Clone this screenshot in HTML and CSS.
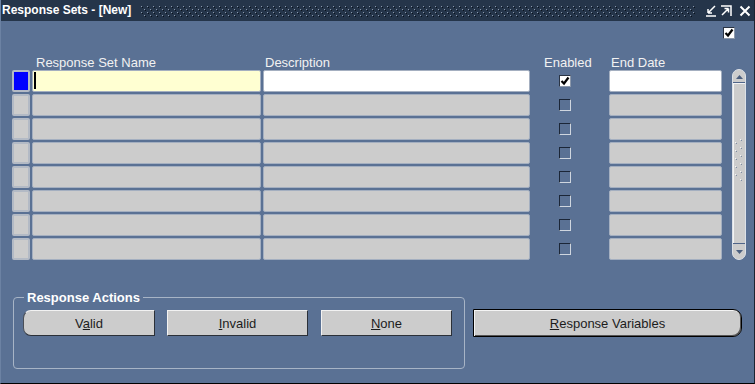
FILE: index.html
```html
<!DOCTYPE html>
<html lang="en">
<head>
    <meta charset="UTF-8">
    <title>Response Sets - [New]</title>
    <link rel="stylesheet" href="styles.css">
</head>
<body>
    <div class="window">
        <div class="titlebar">
            <span class="title">Response Sets - [New]</span>
            <svg class="title-dots" width="555" height="12">
                <defs>
                    <pattern id="dots" width="6" height="6" patternUnits="userSpaceOnUse">
                        <rect x="0" y="1" width="1" height="1" fill="#8a98ab"/>
                        <rect x="1" y="2" width="1" height="1" fill="#0b121b"/>
                        <rect x="3" y="4" width="1" height="1" fill="#8a98ab"/>
                        <rect x="4" y="5" width="1" height="1" fill="#0b121b"/>
                    </pattern>
                </defs>
                <rect width="555" height="12" fill="url(#dots)"/>
            </svg>
            <div class="controls">
                <!-- minimize -->
                <svg class="ctl ctl-min" width="10" height="12" viewBox="0 0 10 12">
                    <path d="M9 1 L2 8 M2 8 L2 4 M2 8 L6 8 M0 11 L10 11" stroke="#fff" stroke-width="1.5" fill="none"/>
                </svg>
                <!-- maximize -->
                <svg class="ctl ctl-max" width="11" height="12" viewBox="0 0 11 12">
                    <path d="M0 1 L10 1 L10 11 M1 10 L7.5 3.5 M7.5 3.5 L3.5 3.5 M7.5 3.5 L7.5 7.5" stroke="#fff" stroke-width="1.5" fill="none"/>
                </svg>
                <!-- close -->
                <svg class="ctl ctl-close" width="12" height="12" viewBox="0 0 12 12">
                    <path d="M1.5 1.5 L10.5 10.5 M10.5 1.5 L1.5 10.5" stroke="#fff" stroke-width="2" fill="none"/>
                </svg>
            </div>
        </div>

        <div class="content">
            <div class="top-row">
                <span class="check checked">
                    <svg width="10" height="10" viewBox="0 0 10 10"><path d="M1.5 5 L4 7.5 L8.5 1.5" stroke="#000" stroke-width="2.2" fill="none"/></svg>
                </span>
            </div>

            <div class="headers">
                <span></span>
                <span class="h-name">Response Set Name</span>
                <span class="h-desc">Description</span>
                <span class="h-enabled">Enabled</span>
                <span class="h-date">End Date</span>
            </div>

            <div class="block">
                <div class="records">
                    <div class="record">
                        <span class="indicator current"></span>
                        <span class="field name active"><span class="cursor"></span></span>
                        <span class="field desc white"></span>
                        <span class="cell-enabled">
                            <span class="check checked">
                                <svg width="10" height="10" viewBox="0 0 10 10"><path d="M1.5 5 L4 7.5 L8.5 1.5" stroke="#000" stroke-width="2.2" fill="none"/></svg>
                            </span>
                        </span>
                        <span class="field date white"></span>
                    </div>
                    <div class="record">
                        <span class="indicator"></span>
                        <span class="field name"></span>
                        <span class="field desc"></span>
                        <span class="cell-enabled"><span class="check"></span></span>
                        <span class="field date"></span>
                    </div>
                    <div class="record">
                        <span class="indicator"></span>
                        <span class="field name"></span>
                        <span class="field desc"></span>
                        <span class="cell-enabled"><span class="check"></span></span>
                        <span class="field date"></span>
                    </div>
                    <div class="record">
                        <span class="indicator"></span>
                        <span class="field name"></span>
                        <span class="field desc"></span>
                        <span class="cell-enabled"><span class="check"></span></span>
                        <span class="field date"></span>
                    </div>
                    <div class="record">
                        <span class="indicator"></span>
                        <span class="field name"></span>
                        <span class="field desc"></span>
                        <span class="cell-enabled"><span class="check"></span></span>
                        <span class="field date"></span>
                    </div>
                    <div class="record">
                        <span class="indicator"></span>
                        <span class="field name"></span>
                        <span class="field desc"></span>
                        <span class="cell-enabled"><span class="check"></span></span>
                        <span class="field date"></span>
                    </div>
                    <div class="record">
                        <span class="indicator"></span>
                        <span class="field name"></span>
                        <span class="field desc"></span>
                        <span class="cell-enabled"><span class="check"></span></span>
                        <span class="field date"></span>
                    </div>
                    <div class="record">
                        <span class="indicator"></span>
                        <span class="field name"></span>
                        <span class="field desc"></span>
                        <span class="cell-enabled"><span class="check"></span></span>
                        <span class="field date"></span>
                    </div>
                </div>

                <div class="scrollbar">
                    <div class="sb-up">
                        <svg width="7" height="4" viewBox="0 0 7 4"><path d="M0 4 L3.5 0 L7 4 Z" fill="#4b5f7f"/></svg>
                    </div>
                    <div class="sb-track">
                        <svg width="10" height="42" viewBox="0 0 10 42">
                            <g fill="#f4f4f4">
                                <rect x="1" y="3" width="1" height="1"/><rect x="1" y="11" width="1" height="1"/>
                                <rect x="1" y="19" width="1" height="1"/><rect x="1" y="27" width="1" height="1"/>
                                <rect x="1" y="35" width="1" height="1"/>
                                <rect x="6" y="0" width="1" height="1"/><rect x="6" y="8" width="1" height="1"/>
                                <rect x="6" y="16" width="1" height="1"/><rect x="6" y="24" width="1" height="1"/>
                                <rect x="6" y="32" width="1" height="1"/><rect x="6" y="40" width="1" height="1"/>
                            </g>
                            <g fill="#7d8ca2">
                                <rect x="2" y="4" width="1" height="1"/><rect x="2" y="12" width="1" height="1"/>
                                <rect x="2" y="20" width="1" height="1"/><rect x="2" y="28" width="1" height="1"/>
                                <rect x="2" y="36" width="1" height="1"/>
                                <rect x="7" y="1" width="1" height="1"/><rect x="7" y="9" width="1" height="1"/>
                                <rect x="7" y="17" width="1" height="1"/><rect x="7" y="25" width="1" height="1"/>
                                <rect x="7" y="33" width="1" height="1"/><rect x="7" y="41" width="1" height="1"/>
                            </g>
                        </svg>
                    </div>
                    <div class="sb-down">
                        <svg width="7" height="4" viewBox="0 0 7 4"><path d="M0 0 L3.5 4 L7 0 Z" fill="#4b5f7f"/></svg>
                    </div>
                </div>
            </div>

            <div class="actions">
                <fieldset class="group">
                    <legend>Response Actions</legend>
                    <div class="buttons">
                        <button class="btn btn-valid">V<u>a</u>lid</button>
                        <button class="btn btn-invalid"><u>I</u>nvalid</button>
                        <button class="btn btn-none"><u>N</u>one</button>
                    </div>
                </fieldset>
                <button class="btn btn-vars"><u>R</u>esponse Variables</button>
            </div>
        </div>
    </div>
</body>
</html>
```

FILE: styles.css
```css
body {
    margin: 0;
    font-family: "Liberation Sans", Arial, sans-serif;
    background: #5a7194;
}
.window {
    width: 755px;
    height: 384px;
    box-sizing: border-box;
    background: #5a7194;
    border-left: 1px solid #6c82a3;
    border-right: 1px solid #1c2331;
    border-bottom: 1px solid #000;
    overflow: hidden;
    display: flex;
    flex-direction: column;
}

/* title bar */
.titlebar {
    height: 21px;
    flex: none;
    background: #25354a;
    display: flex;
    align-items: center;
    color: #fff;
}
.title {
    font-size: 12px;
    font-weight: bold;
    line-height: 21px;
    padding-left: 1px;
    white-space: nowrap;
}
.title-dots {
    display: block;
    margin-left: 10px;
    flex: none;
}
.controls {
    display: flex;
    align-items: center;
}
.ctl {
    display: block;
}
.ctl-min {
    margin-left: 10px;
}
.ctl-max {
    margin-left: 5px;
}
.ctl-close {
    margin-left: 7px;
}

/* form content */
.content {
    flex: 1;
    padding: 6px 0 0 11px;
}
.top-row {
    display: flex;
    justify-content: flex-end;
    padding-right: 19px;
}
.check {
    display: flex;
    align-items: center;
    justify-content: center;
    width: 12px;
    height: 12px;
    box-sizing: border-box;
    border: 1px solid;
    border-color: #1b2637 #cfd6df #cfd6df #1b2637;
}
.check.checked {
    background: #fff;
    border-color: #2a3444 #8c98aa #8c98aa #2a3444;
}
.check svg {
    display: block;
}

.headers,
.record {
    display: grid;
    grid-template-columns: 18px 229px 267px 75px 113px;
    column-gap: 2px;
}
.headers {
    margin-top: 16px;
    font-size: 13px;
    line-height: 15px;
    color: #f2f2f2;
    white-space: nowrap;
}
.h-name {
    padding-left: 4px;
}
.h-desc,
.h-date {
    padding-left: 2px;
}
.h-enabled {
    padding-left: 12px;
}

.block {
    display: flex;
    align-items: flex-start;
}
.records {
    display: flex;
    flex-direction: column;
    gap: 2px;
}
.record {
    height: 22px;
}
.field,
.indicator {
    display: block;
    box-sizing: border-box;
    background: #cccccc;
    border: 1px solid #a4afc0;
    border-radius: 2px;
}
.indicator {
    border-width: 2px;
    border-color: #b3bac5;
}
.indicator.current {
    background: #0000ff;
}
.field.active {
    background: #ffffd2;
}
.field.white {
    background: #fff;
}
.cursor {
    display: block;
    width: 2px;
    height: 17px;
    margin: 1px 0 0 1px;
    background: #000;
}
.cell-enabled {
    display: flex;
    align-items: center;
    padding-left: 27px;
}

/* scrollbar */
.scrollbar {
    margin: -1px 0 0 10px;
    width: 14px;
    height: 191px;
    box-sizing: border-box;
    border: 1px solid #dce1e7;
    border-radius: 7px;
    background: #cccccc;
    overflow: hidden;
    display: flex;
    flex-direction: column;
}
.sb-up {
    height: 11px;
    flex: none;
    border-bottom: 1px solid #4f6589;
    display: flex;
    align-items: center;
    justify-content: center;
    padding-top: 1px;
}
.sb-track {
    flex: 1;
    display: flex;
    justify-content: center;
    padding-top: 56px;
    box-shadow: inset 1px 1px #f2f2f2;
}
.sb-track svg,
.sb-up svg,
.sb-down svg {
    display: block;
}
.sb-down {
    height: 16px;
    flex: none;
    border-top: 1px solid #4f6589;
    display: flex;
    justify-content: center;
    padding-top: 6px;
    box-sizing: border-box;
}

/* bottom buttons */
.actions {
    display: flex;
    align-items: flex-start;
    margin-top: 30px;
}
.group {
    margin: 0 0 0 1px;
    width: 452px;
    box-sizing: border-box;
    border: 1px solid #a7b4c6;
    border-radius: 4px;
    padding: 5px 0 32px 10px;
    min-width: 0;
}
.group legend {
    padding: 0 3px;
    color: #fff;
    font-size: 13px;
    font-weight: bold;
    line-height: 15px;
}
.buttons {
    display: flex;
    margin-left: -1px;
}
.btn {
    height: 26px;
    padding: 0;
    box-sizing: border-box;
    font-family: "Liberation Sans", Arial, sans-serif;
    font-size: 13px;
    color: #1c1c1c;
    background: #cccccc;
    border: 1px solid;
    border-color: #f2f2f2 #2b3038 #2b3038 #f2f2f2;
    border-radius: 0;
}
.btn-valid {
    width: 132px;
    border-radius: 8px 0 0 8px;
    border-left-color: #4a4f58;
}
.btn-invalid {
    width: 141px;
    margin-left: 12px;
}
.btn-none {
    width: 131px;
    margin-left: 13px;
}
.btn-vars {
    width: 269px;
    height: 28px;
    margin: 19px 0 0 8px;
    border-color: #000;
    border-radius: 0 9px 9px 0;
    box-shadow: inset 1px 1px #f4f4f4, inset -1px -1px #555;
}
```
